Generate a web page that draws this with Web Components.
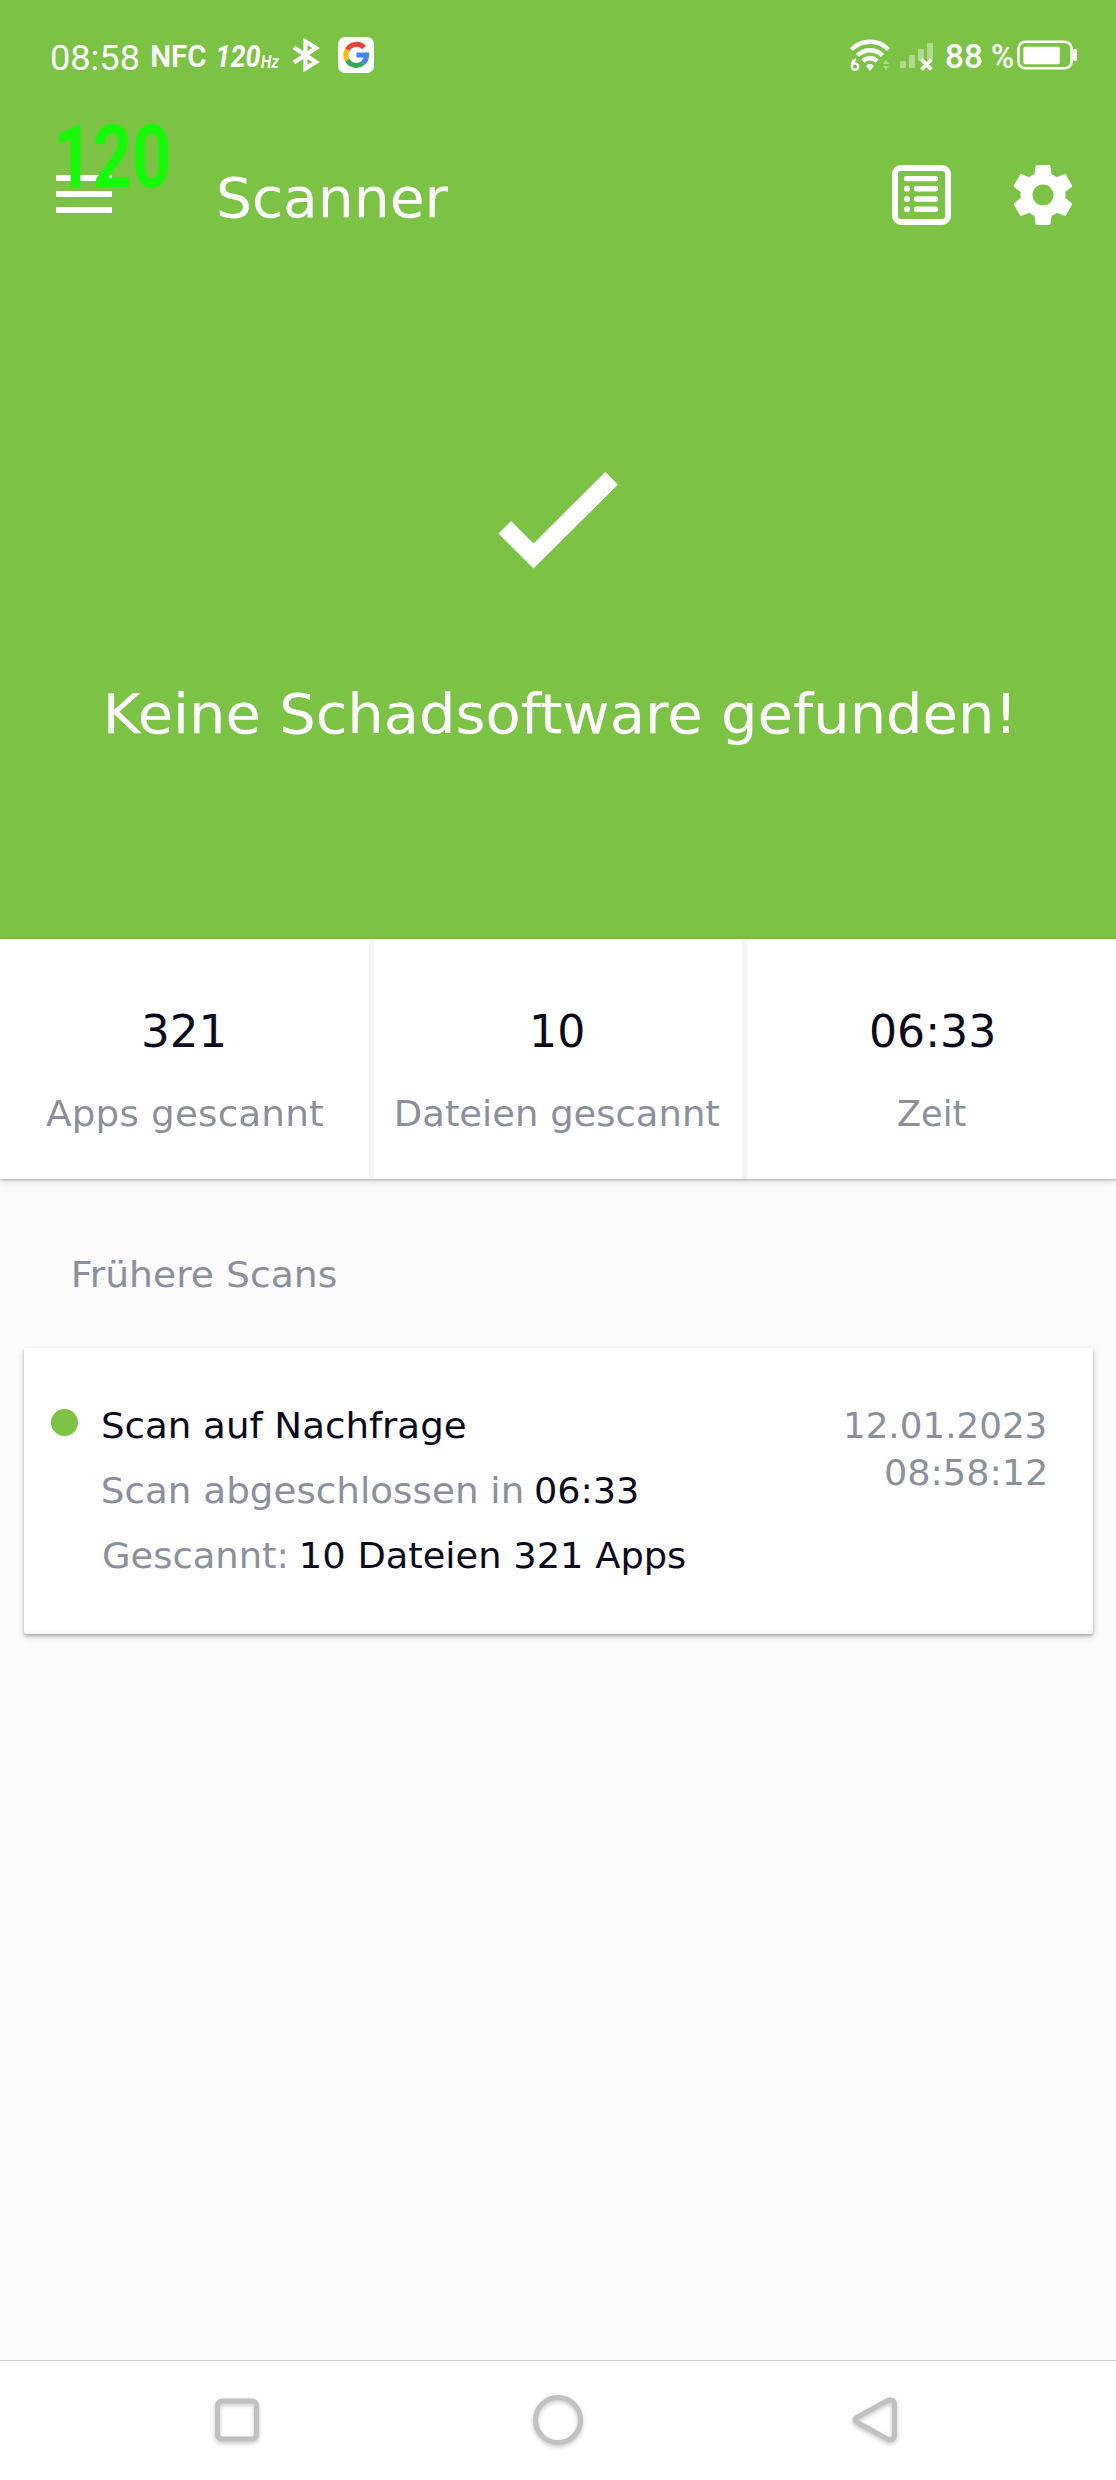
<!DOCTYPE html>
<html lang="de">
<head>
<meta charset="utf-8">
<title>Scanner</title>
<style>
html,body{margin:0;padding:0}
body{width:1116px;height:2480px;overflow:hidden;font-family:"DejaVu Sans","Noto Sans",sans-serif;background:#fbfbfb}
</style>
</head>
<body>
<scanner-app></scanner-app>
<script>
const define = (name, html, setup) => customElements.define(name, class extends HTMLElement {
  connectedCallback() {
    if (this.shadowRoot) return;
    this.attachShadow({mode: 'open'}).innerHTML = html;
    if (setup) setup(this);
  }
});

define('scanner-app', `<style>
:host{display:flex;flex-direction:column;width:1116px;height:2480px;background:#fbfbfb;color:#0a0a1c}
header{display:flex;flex-direction:column;height:939px;background:#7bc245;color:#fff;flex:none}
h2{margin:72px 0 0 74px;font-weight:400;font-size:35px;line-height:48px;color:#8a919c;height:48px}
.stats{display:flex;height:240px;flex:none;background:#fff;box-shadow:0 1px 2px rgba(0,0,0,.25),0 3px 8px rgba(0,0,0,.12)}
.stats i{flex:none;width:5px;background:#f5f5f5}
main{flex:1;display:flex;flex-direction:column}
h2,fit-text{flex:none}
</style>
<header><status-bar></status-bar><tool-bar></tool-bar><scan-result>Keine Schadsoftware gefunden!</scan-result></header>
<section class="stats">
<stat-cell label="Apps gescannt" lw="277" value="321" vw="80"></stat-cell><i></i>
<stat-cell label="Dateien gescannt" lw="322" value="10" vw="50"></stat-cell><i></i>
<stat-cell label="Zeit" lw="67.5" value="06:33" vw="122"></stat-cell></section>
<main><h2><fit-text w="262">Frühere Scans</fit-text></h2><scan-card></scan-card></main>
<nav-bar></nav-bar>`);

define('status-bar', `<style>
:host{display:flex;height:110px;flex:none;align-items:center;padding:0 39px 0 52px;box-sizing:border-box;font-family:Roboto,sans-serif;color:#fff}
svg{display:block;flex:none}
.time{font-size:35.5px;line-height:44px;margin:6px 13px 0 0}
.nfc{font-size:31.5px;line-height:44px;font-weight:600;margin:3px 12px 0 0}
.hz{font-size:31.5px;line-height:44px;font-weight:700;font-style:italic;margin:3px 1px 0 0}
.unit{font-size:18px;line-height:24px;font-weight:700;font-style:italic;margin:14px 13px 0 0}
.sp{flex:1}
.pct{font-size:33px;line-height:44px;font-weight:500;margin:4px 10px 0 0}
</style>
<fit-text class="time" w="87">08:58</fit-text>
<fit-text class="nfc" w="54">NFC</fit-text>
<fit-text class="hz" w="42">120</fit-text>
<fit-text class="unit" w="18">Hz</fit-text>
<svg width="28" height="34" viewBox="0 0 28 34" fill="none" stroke="#fff" stroke-width="4.200" stroke-linejoin="miter"><path d="M2 9.500 24 24 13.500 30.500V3.500L24 10 2 24.500"/></svg>
<svg style="margin-left:18px" width="36" height="36" viewBox="0 0 36 36"><rect width="36" height="36" rx="7" fill="#fff"/><g fill="none" stroke-width="5"><path d="M26 10.600A10.600 10.600 0 0 0 9.200 12.700" stroke="#e94335"/><path d="M9.200 12.700a10.600 10.600 0 0 0 0 10.600" stroke="#fbbc05"/><path d="M9.200 23.300a10.600 10.600 0 0 0 15.700 2.800" stroke="#34a853"/><path d="M24.900 26.100A10.600 10.600 0 0 0 28.600 18H18.500" stroke="#4285f4"/></g></svg>
<div class="sp"></div>
<svg width="40" height="34" viewBox="0 0 40 34" fill="none" stroke="#fff" stroke-width="4.400"><path d="M1.500 11.500a26 26 0 0 1 37 0M7.500 17.500a17.500 17.500 0 0 1 25 0M13 23.100a10 10 0 0 1 14 0"/><path d="M20 33l-4-5a5 5 0 0 1 8 0z" fill="#fff" stroke="none"/><g stroke-width="2.400"><circle cx="5" cy="28.600" r="3.200"/><path d="M2 28c0-4 1.500-5.800 4-6.500"/></g><path d="M36 22l3.200 4h-6.400zM36 32l3.200-4h-6.400z" fill="#a9dc85" stroke="none"/></svg>
<svg style="margin:0 11px 0 10px" width="35" height="34" viewBox="0 0 35 34"><g fill="#b1da8e"><rect y="23" width="6" height="7" rx="1"/><rect x="9" y="17" width="6" height="13" rx="1"/><rect x="18" y="11" width="6" height="12" rx="1"/><rect x="27" y="5" width="6" height="17" rx="1"/></g><path d="M21.500 21.500l10 10m0-10l-10 10" stroke="#fff" stroke-width="3.800"/></svg>
<fit-text class="pct" w="36">88</fit-text><fit-text class="pct" style="margin-right:4px" w="21">%</fit-text>
<svg width="60" height="32" viewBox="0 0 61 32"><rect x="1.500" y="2.500" width="54" height="27" rx="7" fill="none" stroke="#fff" stroke-width="2.600"/><rect x="6.500" y="7.500" width="37" height="18" rx="2" fill="#fff"/><rect x="57" y="10" width="4" height="12" rx="1.500" fill="#fff"/></svg>`);

define('tool-bar', `<style>
:host{display:flex;position:relative;height:170px;flex:none;align-items:center;padding:0 37px 0 56px;box-sizing:border-box}
svg{display:block;flex:none}
.title{font-size:55.5px;line-height:80px;margin:6px 0 0 107px}
.fps{position:absolute;left:59px;top:-8px;color:#16fa0a;font:700 87px/110px Roboto,sans-serif}
</style>
<svg width="56" height="40" viewBox="0 0 56 40" fill="#fff"><path d="M0 0h56v6H0zM0 16h56v6H0zM0 32h56v6H0z"/></svg>
<fit-text class="title" w="229">Scanner</fit-text>
<div style="flex:1"></div>
<svg width="59" height="60" viewBox="0 0 59 60"><rect x="3" y="3" width="53" height="54" rx="6" fill="none" stroke="#fff" stroke-width="6"/><g stroke="#fff" stroke-width="5.400" stroke-linecap="round"><path d="M14.500 13.600h29M24.500 23.800h19M24.500 34h19M24.500 44.300h19"/></g><g fill="#fff"><circle cx="15" cy="23.800" r="3"/><circle cx="15" cy="34" r="3"/><circle cx="15" cy="44.300" r="3"/></g></svg>
<svg style="margin-left:56px" width="72" height="72" viewBox="0 0 24 24" fill="#fff"><path d="M19.430 12.980c.04-.32.07-.64.07-.98s-.03-.66-.07-.98l2.110-1.650c.19-.15.24-.42.12-.64l-2-3.460c-.12-.22-.39-.3-.61-.22l-2.490 1c-.52-.4-1.080-.73-1.690-.98l-.38-2.650C14.460 2.180 14.250 2 14 2h-4c-.25 0-.46.18-.49.42l-.38 2.650c-.61.25-1.170.59-1.690.98l-2.490-1c-.23-.09-.49 0-.61.22l-2 3.460c-.13.22-.07.49.12.64l2.110 1.650c-.04.32-.07.65-.07.98s.03.66.07.98l-2.110 1.650c-.19.15-.24.42-.12.64l2 3.460c.12.22.39.3.61.22l2.490-1c.52.4 1.080.73 1.690.98l.38 2.650c.03.24.24.42.49.42h4c.25 0 .46-.18.49-.42l.38-2.650c.61-.25 1.170-.59 1.690-.98l2.490 1c.23.09.49 0 .61-.22l2-3.460c.12-.22.07-.49-.12-.64l-2.110-1.650zM12 15.500c-1.930 0-3.500-1.570-3.500-3.500s1.570-3.500 3.500-3.500 3.500 1.570 3.500 3.500-1.570 3.500-3.500 3.500z"/></svg>
<fit-text class="fps" w="109">120</fit-text>`);

define('scan-result', `<style>
:host{display:flex;flex-direction:column;align-items:center;padding-top:192px;font-size:55.500px;line-height:80px}
svg{display:block;margin-bottom:105px}
</style>
<svg width="120" height="97" viewBox="0 0 120 97" fill="#fff"><path d="M107.300 0 120 12.500 35.500 96.500.5 61.500 13 49 35.500 71.500z"/></svg>
<fit-text w="901"></fit-text>`, el => { el.shadowRoot.querySelector('fit-text').textContent = el.textContent; });

define('stat-cell', `<style>
:host{flex:1;display:flex;flex-direction:column;align-items:center;padding-top:63px}
.v{font-size:44.500px;line-height:60px;color:#0a0a1c}
.l{font-size:35px;line-height:48px;color:#8a919c;margin-top:28px}
</style><fit-text class="v"></fit-text><fit-text class="l"></fit-text>`, el => {
  for (const [cls, text, w] of [['.v', 'value', 'vw'], ['.l', 'label', 'lw']]) {
    const t = el.shadowRoot.querySelector(cls);
    t.setAttribute('w', el.getAttribute(w));
    t.textContent = el.getAttribute(text);
  }
});

define('scan-card', `<style>
:host{display:flex;align-items:flex-start;box-sizing:border-box;margin:49px 23px 0 24px;height:286px;padding:0 48px 0 27px;background:#fff;border-radius:2px;border-bottom:4px solid #f7f7f7;font-size:35px;box-shadow:0 2px 3px rgba(0,0,0,.22),0 3px 7px rgba(0,0,0,.16)}
.dot{width:27px;height:27px;border-radius:50%;background:#7bc245;margin:61px 25px 0 0;flex:none}
.lines{flex:1;display:flex;flex-direction:column;line-height:65px;padding-top:46px}
.row{display:flex}
.g{color:#8a919c}
.date{display:flex;flex-direction:column;align-items:flex-end;line-height:47px;padding-top:55px;color:#8a919c}
</style>
<div class="dot"></div>
<div class="lines">
<div class="row"><fit-text w="362">Scan auf Nachfrage</fit-text></div>
<div class="row"><fit-text class="g" w="419">Scan abgeschlossen in</fit-text><fit-text style="margin-left:14px" w="101">06:33</fit-text></div>
<div class="row"><fit-text class="g" w="182">Gescannt:</fit-text><fit-text style="margin-left:17px" w="383">10 Dateien 321 Apps</fit-text></div>
</div>
<div class="date"><fit-text w="199">12.01.2023</fit-text><fit-text w="159">08:58:12</fit-text></div>`);

define('nav-bar', `<style>
:host{display:flex;align-items:center;box-sizing:border-box;height:120px;flex:none;border-top:1px solid #ccc;background:#fff;padding-left:207px}
svg{display:block;flex:none;overflow:visible;filter:drop-shadow(0 2px 2px rgba(0,0,0,.22));fill:none;stroke:#c1c1c1;stroke-width:5}
</style>
<svg width="60" height="60"><rect x="10.500" y="10" width="39" height="38" rx="4.500"/></svg>
<svg style="margin-left:261px" width="60" height="60"><circle cx="30" cy="29" r="22.500"/></svg>
<svg style="margin-left:256px" width="60" height="60"><path d="M12.500 26.500 43.500 9.500Q50 7.500 50.500 13V44Q50 50 44 48.500L12.500 31Q9.500 29 12.500 26.500z"/></svg>`);

/* Sets a line of text to a given ink width by scaling it horizontally. */
const pen = document.createElement('canvas').getContext('2d');
define('fit-text', `<style>
:host{display:block;white-space:pre}
span{display:inline-block;transform-origin:0 50%}
</style><span><slot></slot></span>`, el => {
  const cs = getComputedStyle(el), w = parseFloat(el.getAttribute('w')), text = el.textContent;
  const span = el.shadowRoot.querySelector('span');
  pen.font = `${cs.fontStyle} ${cs.fontWeight} ${cs.fontSize} ${cs.fontFamily}`;
  const m = pen.measureText(text), ink = m.actualBoundingBoxLeft + m.actualBoundingBoxRight;
  el.style.width = w + 'px';
  span.style.transform = `scaleX(${w / ink}) translateX(${m.actualBoundingBoxLeft}px)`;
});
</script>
</body>
</html>
